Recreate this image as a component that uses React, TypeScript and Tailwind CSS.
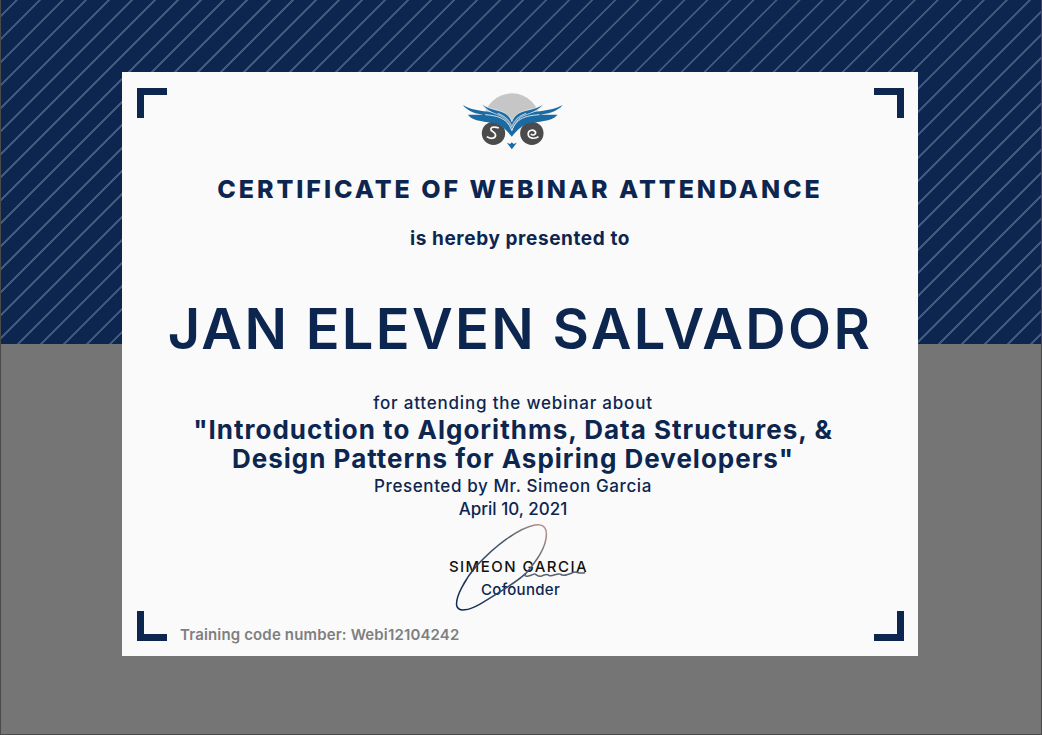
import React from "react";

const navy = "text-[#0d2650]";

const Logo = () => (
  <svg width="107" height="60" viewBox="60 36 320 180" className="block">
    <path d="M130 125 A85 85 0 0 1 300 125 Z" fill="#c6c6c6" />
    <circle cx="160" cy="160" r="35" fill="#4b4b4b" />
    <circle cx="275" cy="160" r="35" fill="#4b4b4b" />
    <path d="M140 170 C150 178 168 176 166 164 C164 152 150 156 152 146 C154 140 166 140 176 144" fill="none" stroke="#fafafa" strokeWidth="5" />
    <path d="M295 170 C285 178 264 176 264 162 C264 150 280 146 286 156 C288 164 278 168 272 162" fill="none" stroke="#fafafa" strokeWidth="5" />
    <path
      d="M68 75 C100 96 150 92 190 106 C205 114 212 126 215 136 C218 126 225 114 240 106 C280 92 330 96 368 75 C350 96 320 102 300 104 L352 104 C335 126 290 124 265 130 C245 136 230 152 215 170 C200 152 185 136 165 130 C140 124 100 126 83 104 L130 104 C110 102 85 96 68 75 Z"
      fill="#1b6aa2"
    />
    <path d="M86 104 L300 104" stroke="#fafafa" strokeWidth="0" />
    <path d="M135 104 C160 106 180 110 195 122 C205 130 212 142 215 152 C218 142 225 130 235 122 C250 110 270 106 298 104" fill="none" stroke="#fafafa" strokeWidth="2.5" />
    <path
      d="M125 72 C150 90 175 88 195 100 C205 106 212 115 215 125 C218 115 225 106 235 100 C255 88 285 90 310 72 C295 95 265 100 245 110 C232 118 222 132 215 150 C208 132 198 118 185 110 C165 100 140 95 125 72 Z"
      fill="#1b6aa2"
      stroke="#fafafa"
      strokeWidth="2"
    />
    <path d="M172 100 C195 108 208 122 215 140 C222 122 235 108 258 100" fill="none" stroke="#a9bfd0" strokeWidth="4" />
    <path d="M200 188 L210 192 L215 187 L220 192 L230 188 L215 208 Z" fill="#1b6aa2" />
  </svg>
);

const Signature = () => (
  <svg width="137" height="93" viewBox="70 30 410 280" fill="none" className="block">
    <defs>
      <linearGradient id="sig" gradientUnits="userSpaceOnUse" x1="80" y1="300" x2="340" y2="40">
        <stop offset="0" stopColor="#0d2650" />
        <stop offset="0.7" stopColor="#4f5c72" />
        <stop offset="1" stopColor="#b8948a" />
      </linearGradient>
    </defs>
    <path
      d="M285 192 C320 150 350 110 350 70 C350 45 335 38 315 42 C265 52 195 105 140 165 C105 205 75 260 80 285 C85 305 115 300 150 280 C200 250 260 215 285 190"
      stroke="url(#sig)"
      strokeWidth="4.5"
      strokeLinecap="round"
    />
    <path
      d="M285 190 C282 200 300 196 312 190 C318 186 322 200 335 196 C345 190 352 188 358 194 C370 198 380 186 392 190 C400 198 415 192 430 185 C440 180 445 190 465 186"
      stroke="#5a6270"
      strokeWidth="4.5"
      strokeLinecap="round"
    />
  </svg>
);

const App = () => {
  return (
    <div className="relative flex h-[735px] w-[1042px] flex-col overflow-hidden border-x border-b border-[#4a4a4a] bg-[#757575] font-['Inter','Liberation_Sans',sans-serif]">
      <div className="h-[344px] bg-[#0d2650] bg-[repeating-linear-gradient(135deg,#0d2650_0px,#0d2650_10px,#425a7c_10.4px,#425a7c_11.9px,#0d2650_12.3px,#0d2650_16.28px)]" />
      <div className="flex-1" />

      <div className="absolute left-[121px] top-[72px] flex h-[584px] w-[796px] flex-col items-center bg-[#fafafa]">
        <div className="absolute left-[15px] top-[16px] h-[30px] w-[30px] border-l-[7px] border-t-[7px] border-[#0d2650]" />
        <div className="absolute right-[14px] top-[16px] h-[30px] w-[30px] border-r-[7px] border-t-[7px] border-[#0d2650]" />
        <div className="absolute bottom-[15px] left-[15px] h-[30px] w-[30px] border-b-[7px] border-l-[7px] border-[#0d2650]" />
        <div className="absolute bottom-[15px] right-[14px] h-[30px] w-[30px] border-b-[7px] border-r-[7px] border-[#0d2650]" />

        <div className="mr-[14px] mt-[20px]">
          <Logo />
        </div>
        <h1 className={`mt-[22px] text-[25px] font-extrabold leading-[30px] tracking-[2.95px] ${navy}`}>
          CERTIFICATE OF WEBINAR ATTENDANCE
        </h1>
        <p className={`mt-[24px] text-[19px] font-bold leading-[22px] tracking-[0.6px] ${navy}`}>is hereby presented to</p>
        <p className={`mt-[44px] text-[56px] font-semibold leading-[70px] tracking-[2.3px] ${navy}`}>JAN ELEVEN SALVADOR</p>

        <div className="mr-[14px] flex flex-col items-center">
          <p className={`mt-[29px] text-[17px] font-medium leading-[20px] tracking-[0.8px] ${navy}`}>for attending the webinar about</p>
          <p className={`mt-[2px] text-center text-[26px] font-bold leading-[29px] tracking-[1px] ${navy}`}>
            "Introduction to Algorithms, Data Structures, &amp;
            <br />
            Design Patterns for Aspiring Developers"
          </p>
          <p className={`mt-[2px] text-[17px] font-medium leading-[23px] tracking-[0.6px] ${navy}`}>Presented by Mr. Simeon Garcia</p>
          <p className={`text-[17px] font-medium leading-[23px] ${navy}`}>April 10, 2021</p>
        </div>

        <div className="relative mr-[3px] mt-[36px] flex flex-col items-center">
          <p className="text-[15px] font-medium leading-[20px] tracking-[1.45px] text-[#111111]">SIMEON GARCIA</p>
          <p className={`ml-[4px] mt-[3px] text-[15px] font-medium leading-[20px] tracking-[0.3px] ${navy}`}>Cofounder</p>
          <div className="absolute left-[4px] top-[-36px]">
            <Signature />
          </div>
        </div>

        <p className="absolute bottom-[12px] left-[58px] text-[15px] font-semibold leading-[18px] tracking-[0.15px] text-[#7f7f7f]">
          Training code number: Webi12104242
        </p>
      </div>
    </div>
  );
};

export default App;
